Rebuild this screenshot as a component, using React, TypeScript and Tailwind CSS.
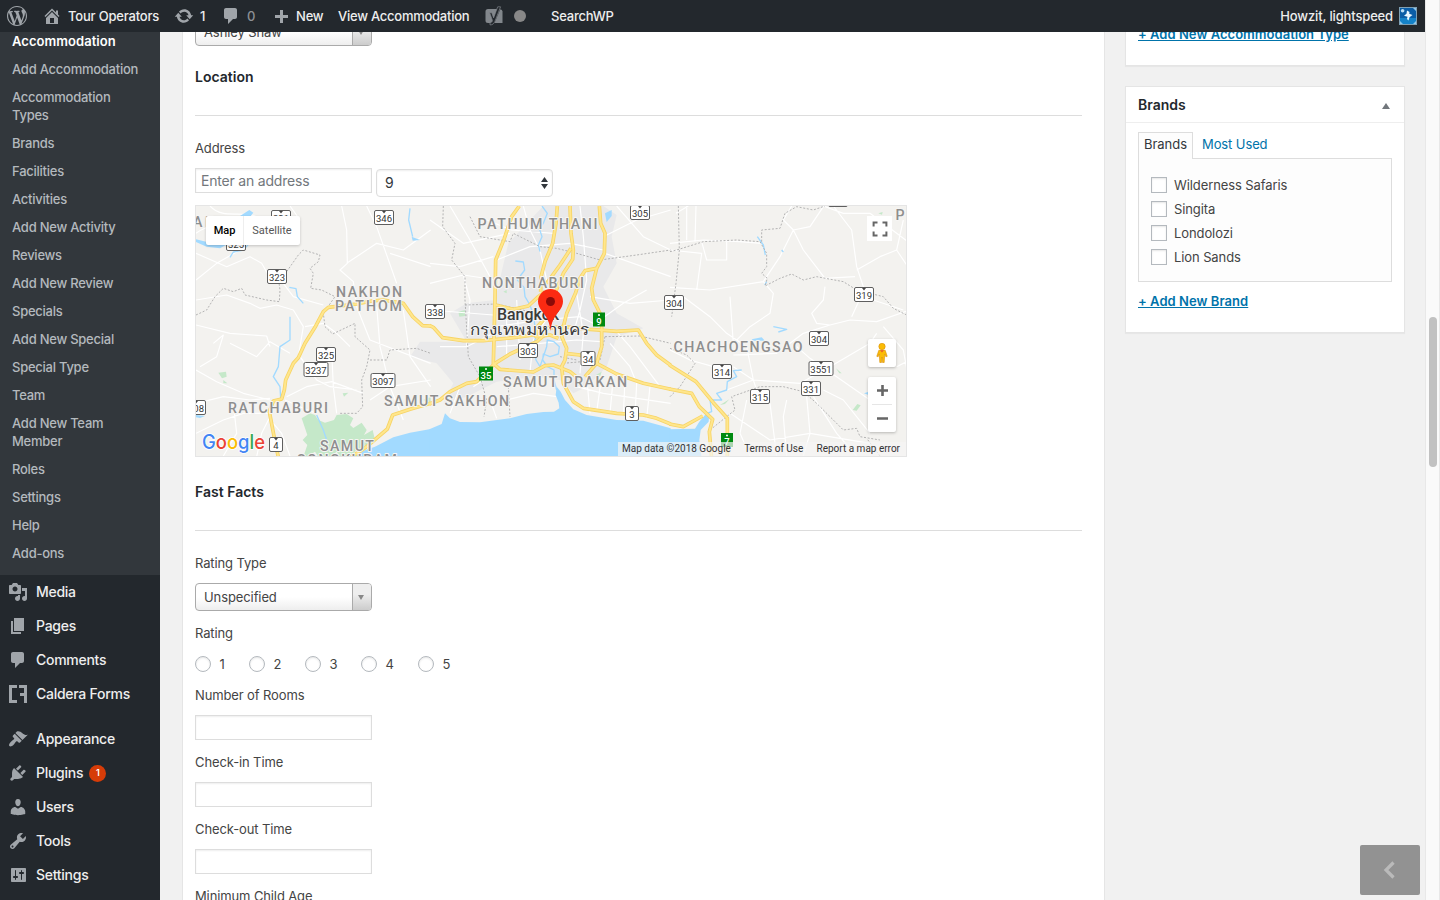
import React from "react";

const ICONS = {
  wordpress:
    "M20 10c0-5.51-4.49-10-10-10C4.48 0 0 4.49 0 10c0 5.52 4.48 10 10 10 5.51 0 10-4.48 10-10zM7.78 15.37L4.37 6.22c.55-.02 1.17-.08 1.17-.08.5-.06.44-1.13-.06-1.11 0 0-1.45.11-2.37.11-.18 0-.37 0-.58-.01C4.12 2.69 6.87 1.11 10 1.11c2.33 0 4.45.87 6.05 2.34-.68-.11-1.65.39-1.65 1.58 0 .74.45 1.36.9 2.1.35.61.55 1.36.55 2.46 0 1.49-1.4 5-1.4 5l-3.03-8.37c.54-.02.82-.17.82-.17.5-.05.44-1.25-.06-1.22 0 0-1.44.12-2.38.12-.87 0-2.33-.12-2.33-.12-.5-.03-.56 1.2-.06 1.22l.92.08 1.26 3.41zM17.41 10c.24-.64.74-1.87.43-4.25.7 1.29 1.05 2.71 1.05 4.25 0 3.29-1.73 6.24-4.4 7.78.97-2.59 1.94-5.2 2.92-7.78zM6.1 18.09C3.12 16.65 1.11 13.53 1.11 10c0-1.3.23-2.48.72-3.59C3.25 10.3 4.67 14.2 6.1 18.09zm4.03-6.63l2.58 6.98c-.86.29-1.76.45-2.71.45-.79 0-1.57-.11-2.29-.33.81-2.38 1.62-4.74 2.42-7.1z",
  home: "M16 8.5l1.53 1.53-1.06 1.06L10 4.6l-6.47 6.49-1.06-1.06L10 2.5l4 4v-2h2v4zm-6-2.46l6 5.99V18H4v-5.97zM12 17v-5H8v5h4z",
  update:
    "M10.2 3.28c3.53 0 6.43 2.61 6.92 6h2.08l-3.5 4-3.5-4h2.32c-.45-1.97-2.21-3.45-4.32-3.45-1.45 0-2.73.71-3.54 1.78L4.95 5.66C6.23 4.2 8.11 3.28 10.2 3.28zm-.4 13.44c-3.52 0-6.43-2.61-6.92-6H.8l3.5-4c1.17 1.33 2.33 2.67 3.5 4H5.48c.45 1.97 2.21 3.45 4.32 3.45 1.45 0 2.73-.71 3.54-1.78l1.71 1.95c-1.28 1.46-3.15 2.38-5.25 2.38z",
  comments:
    "M5 2h9c1.1 0 2 .9 2 2v7c0 1.1-.9 2-2 2h-2l-5 5v-5H5c-1.1 0-2-.9-2-2V4c0-1.1.9-2 2-2z",
  plus: "M17 9v3h-5v5H9v-5H4V9h5V4h3v5h5z",
  media:
    "M13 11V4c0-.55-.45-1-1-1h-1.67L9 1H5L3.67 3H2c-.55 0-1 .45-1 1v7c0 .55.45 1 1 1h10c.55 0 1-.45 1-1zM7 4.5c1.38 0 2.5 1.12 2.5 2.5S8.38 9.5 7 9.5 4.5 8.38 4.5 7 5.62 4.5 7 4.5zM14 6h5v10.5c0 1.38-1.12 2.5-2.5 2.5S14 17.88 14 16.5s1.12-2.5 2.5-2.5c.17 0 .34.02.5.05V9h-3V6zm-4 8.05V13h2v3.5c0 1.38-1.12 2.5-2.5 2.5S7 17.88 7 16.5 8.12 14 9.5 14c.17 0 .34.02.5.05z",
  pages: "M6 15V2h10v13H6zm-1 1h8v2H3V5h2v11z",
  caldera: "M1 1h8v3H4v12h5v3H1zM11 1h8v18h-3v-7h-4v-3h4V4h-5z",
  appearance:
    "M14.48 11.06L7.41 3.99l1.5-1.5c.5-.56 2.3-.47 3.51.32 1.21.8 1.43 1.28 2.91 2.1 1.18.64 2.45 1.26 4.45.85zm-.71.71L6.7 4.7 4.93 6.47c-.39.39-.39 1.02 0 1.41l1.06 1.06c.39.39.39 1.03 0 1.42-.6.6-1.43 1.11-2.21 1.69-.35.26-.7.53-1.01.84C1.43 14.23.4 16.08 1.4 17.07c.99 1 2.84-.03 4.18-1.36.31-.31.58-.66.85-1.02.57-.78 1.08-1.61 1.69-2.21.39-.39 1.02-.39 1.41 0l1.06 1.06c.39.39 1.02.39 1.41 0z",
  plugins:
    "M13.11 4.36L9.87 7.6 8 5.73l3.24-3.24c.35-.34 1.05-.2 1.56.32.52.51.66 1.21.31 1.55zm-8 1.77l.91-1.12 9.01 9.01-1.19.84c-.71.71-2.63 1.16-3.82 1.16H6.14L4.9 17.26c-.59.59-1.54.59-2.12 0-.59-.58-.59-1.53 0-2.12l1.24-1.24v-3.88c0-1.13.4-3.19 1.09-3.89zm7.26 3.97l3.24-3.24c.34-.35 1.04-.21 1.55.31.52.51.66 1.21.31 1.55l-3.24 3.25z",
  users:
    "M10 9.25c-2.27 0-2.73-3.44-2.73-3.44C7 4.02 7.82 2 9.97 2c2.16 0 2.98 2.02 2.71 3.81 0 0-.41 3.44-2.68 3.44zm0 2.57L12.72 10c2.39 0 4.52 2.33 4.52 4.53v2.49s-3.65 1.13-7.24 1.13c-3.65 0-7.24-1.13-7.24-1.13v-2.49c0-2.25 1.94-4.48 4.47-4.48z",
  tools:
    "M16.68 9.77c-1.34 1.34-3.3 1.67-4.95.99l-5.41 6.52c-.99.99-2.59.99-3.58 0s-.99-2.59 0-3.57l6.52-5.42c-.68-1.65-.35-3.61.99-4.95 1.28-1.28 3.12-1.62 4.72-1.06l-2.89 2.89 2.82 2.82 2.86-2.87c.53 1.58.18 3.39-1.08 4.65zM3.81 16.21c.4.39 1.04.39 1.43 0 .4-.4.4-1.04 0-1.43-.39-.4-1.03-.4-1.43 0-.39.39-.39 1.03 0 1.43z",
  settings:
    "M18 16V4c0-.55-.45-1-1-1H4c-.55 0-1 .45-1 1v12c0 .55.45 1 1 1h13c.55 0 1-.45 1-1zM8 11h1c.55 0 1 .45 1 1s-.45 1-1 1H8v1.5c0 .28-.22.5-.5.5s-.5-.22-.5-.5V13H6c-.55 0-1-.45-1-1s.45-1 1-1h1V5.5c0-.28.22-.5.5-.5s.5.22.5.5V11zm5-2h-1c-.55 0-1-.45-1-1s.45-1 1-1h1V5.5c0-.28.22-.5.5-.5s.5.22.5.5V7h1c.55 0 1 .45 1 1s-.45 1-1 1h-1v5.5c0 .28-.22.5-.5.5s-.5-.22-.5-.5V9z",
};

type IconName = keyof typeof ICONS;

function Icon({ name, className = "size-5" }: { name: IconName; className?: string }) {
  return (
    <svg viewBox="0 0 20 20" fill="currentColor" className={`shrink-0 ${className}`}>
      <path d={ICONS[name]} />
    </svg>
  );
}

function YoastIcon() {
  return (
    <svg viewBox="0 0 18 20" className="h-5 w-[18px] shrink-0">
      <path d="M3 3h9.5L7.4 17H3a2.5 2.5 0 0 1-2.500-2.500v-9A2.500 2.500 0 0 1 3 3z" fill="#82878c" />
      <path d="M15.300 3.200A2.500 2.500 0 0 1 17.500 5.500V17H9.500z" fill="#82878c" />
      <path
        d="M12.700.8h2.900L9.900 15.400c-.9 2.300-2.100 3.500-4.900 3.500v-2.200c1.400-.2 2.100-.8 2.300-1.700.1-.5 0-1-.3-1.800L4.600 6.700h2.200l1.800 5.200z"
        fill="#23282d"
        stroke="#82878c"
        strokeWidth=".7"
      />
    </svg>
  );
}

function Avatar() {
  return (
    <svg viewBox="0 0 18 18" className="size-[18px] shrink-0">
      <rect width="18" height="18" fill="#7fa0b4" />
      <rect x="1" y="1" width="16" height="16" fill="#0b5da6" />
      <path d="M1 11h16v6H1z" fill="#1482c8" />
      <circle cx="3.600" cy="3.800" r="1.800" fill="#b9dcf3" />
      <path d="M8 3.500L10.500 5l-.3 1.800L13.500 8l-3 2.200-1 3.300L8 12l.5-2.300L5 8.800l2.500-2z" fill="#e9f7ff" />
      <path d="M14 1h3v3zM1 14v3h3zM17 14v3h-3z" fill="#8fc7ea" />
    </svg>
  );
}

function AdminBar() {
  return (
    <header className="flex h-8 w-[1425px] shrink-0 items-center bg-[#23282d] text-[13px] font-medium tracking-[-0.2px] text-[#eee]">
      <div className="flex w-[42px] pl-[7px] text-[#a0a5aa]">
        <Icon name="wordpress" />
      </div>
      <div className="flex w-[132px] items-center gap-[6px] whitespace-nowrap">
        <Icon name="home" className="size-5 text-[#a0a5aa]" />
        <span className="pt-px">Tour Operators</span>
      </div>
      <div className="flex w-[47px] items-center gap-[6px]">
        <Icon name="update" className="size-5 text-[#a0a5aa]" />
        <span className="pt-px">1</span>
      </div>
      <div className="flex w-[50px] items-center gap-[6px] text-[#8c9095]">
        <Icon name="comments" className="size-5 text-[#a0a5aa]" />
        <span className="pt-px">0</span>
      </div>
      <div className="flex w-[67px] items-center gap-[5px]">
        <Icon name="plus" className="size-5 text-[#a0a5aa]" />
        <span className="pt-px">New</span>
      </div>
      <div className="w-[147px] pt-px tracking-[-0.25px] whitespace-nowrap">View Accommodation</div>
      <YoastIcon />
      <span className="ml-[11px] size-3 rounded-full bg-[#888]" />
      <div className="ml-[25px] pt-px">SearchWP</div>
      <div className="ml-auto flex items-center gap-[6px] pr-2 whitespace-nowrap">
        <span className="pt-px tracking-[-0.15px]">Howzit, lightspeed</span>
        <Avatar />
      </div>
    </header>
  );
}

const SUBMENU = [
  "Accommodation",
  "Add Accommodation",
  "Accommodation Types",
  "Brands",
  "Facilities",
  "Activities",
  "Add New Activity",
  "Reviews",
  "Add New Review",
  "Specials",
  "Add New Special",
  "Special Type",
  "Team",
  "Add New Team Member",
  "Roles",
  "Settings",
  "Help",
  "Add-ons",
];

function MenuRow({ icon, label, badge }: { icon: IconName; label: string; badge?: string }) {
  return (
    <li className="flex h-[34px] items-center pl-2 text-[14px] font-medium tracking-[-0.27px] text-[#eee]">
      <Icon name={icon} className="size-5 text-[#a0a5aa]" />
      <span className="ml-2 pb-[2px]">{label}</span>
      {badge && (
        <span className="ml-[6px] flex size-[17px] items-center justify-center rounded-full bg-[#d63c08] text-[9px] font-semibold text-white">
          {badge}
        </span>
      )}
    </li>
  );
}

function Sidebar() {
  return (
    <nav className="h-full w-40 shrink-0 overflow-hidden bg-[#23282d]">
      <ul className="-mt-[5px] bg-[#32373c] pb-2 text-[13px] leading-[18px] font-medium tracking-[-0.25px] text-[#b4b9be]">
        {SUBMENU.map((item, i) => (
          <li
            key={item}
            className={
              i === 0 ? "px-3 py-[5px] font-semibold tracking-[0.05px] text-white" : "py-[5px] pr-[18px] pl-3"
            }
          >
            {item}
          </li>
        ))}
      </ul>
      <ul>
        <MenuRow icon="media" label="Media" />
        <MenuRow icon="pages" label="Pages" />
        <MenuRow icon="comments" label="Comments" />
        <MenuRow icon="caldera" label="Caldera Forms" />
      </ul>
      <ul className="mt-[11px]">
        <MenuRow icon="appearance" label="Appearance" />
        <MenuRow icon="plugins" label="Plugins" badge="1" />
        <MenuRow icon="users" label="Users" />
        <MenuRow icon="tools" label="Tools" />
        <MenuRow icon="settings" label="Settings" />
      </ul>
    </nav>
  );
}

/* Map geometry is kept in three tiles, each 240 units wide at triple scale. */
const WEST = "translate(190 200) scale(.33333)";
const MID = "translate(430 200) scale(.33333)";
const EAST = "translate(670 200) scale(.33333)";

const WATER: [string, string][] = [
  [WEST, "M480 775 L520 752 L555 740 L610 712 L660 698 L722 687 V775Z"],
  [MID, "M-2 688 L35 672 L45 640 L60 655 L90 666 L150 667 L240 655 L290 642 L340 636 L372 635 L388 625 L386 608 L377 585 L380 560 L392 575 L405 600 L430 628 L470 645 L560 660 L640 662 L722 685 V775 H-2Z"],
  [EAST, "M-2 688 L75 686 L88 665 L105 645 L118 640 L116 665 L92 690 L88 720 L95 775 H-2Z"],
  [WEST, "M18 118 L60 128 L110 118 L120 128 L90 145 L50 140 L18 126Z"],
  [WEST, "M150 48 L178 30 L190 38 L182 48Z M665 110 L690 120 L668 122Z M18 645 L45 648 L30 654 L18 652Z"],
  [MID, "M525 40 L545 30 L545 48 L530 66Z"],
  [EAST, "M245 418 L275 412 L285 422 L250 422Z M582 580 L596 575 L596 585Z"],
];

const RIVERS: [string, string][] = [
  [MID, "M336 18 L352 40 L340 70 L328 85 L336 110 L325 135 L330 155"],
  [MID, "M256 183 L280 186 L284 210 L262 240 L282 262 L285 290 L300 315 L310 345 L318 400 L312 440 L318 480 L330 500 L340 470 L350 440 L352 420 L372 425 L388 440 L385 462 L360 470 L340 462 L338 480 L352 500 L372 510 L372 540 L380 570"],
  [WEST, "M120 172 L130 156 L160 150 L180 128 M298 262 L318 266 L322 290 L340 310 M300 350 V420 L270 440 L265 500 L250 530 L270 560 L272 595 M660 25 L656 60 L668 110 M380 645 L400 690 L410 720"],
  [EAST, "M262 110 L280 135 L286 165 M290 245 L284 255 M335 150 L340 156 M310 380 L350 388 L325 396 M215 510 L190 512 L200 530 L172 545 L170 570 L140 580 L155 600 L120 600 L125 635 L110 640"],
];

const PARKS: [string, string][] = [
  [WEST, "M335 655 L360 640 L375 645 L385 660 L405 668 L432 660 L440 645 L470 642 L490 655 L480 675 L490 684 L515 668 L530 690 L522 705 L548 690 L555 720 L540 735 L500 750 L480 770 H450 L440 755 L420 770 H385 L375 755 L350 770 H340 L352 735 L338 720 L352 705Z"],
  [WEST, "M85 518 L108 515 L110 530 L96 535Z M100 540 L112 550 L100 550Z M458 580 L475 578 L462 590Z M700 600 L722 590 V610Z"],
  [EAST, "M625 40 L638 36 L636 44Z M498 505 L515 520 L508 520Z M548 630 L562 612 L572 616 L560 632Z M150 615 L178 598 L165 612Z"],
  [MID, "M220 275 L230 270 L230 280Z M318 290 L330 285 L330 298Z M498 525 L515 515 L510 530Z M85 335 L105 330 L105 348 L88 350Z"],
];

const URBAN =
  "M195 300 L235 130 L300 60 L340 18 H520 L560 45 L545 110 L560 190 L520 260 L560 340 L640 385 L560 410 L530 500 L470 560 L430 580 L390 540 L320 530 L200 545 L110 590 L40 610 L70 550 L20 490 L-60 470 L-30 425 L110 425 L60 340 L110 310Z";

const LANES: [string, string][] = [
  [WEST, "M18 100 C60 70 100 70 140 75 S210 50 250 55 M18 240 L80 190 L150 150 L215 110 L330 60 L300 18 M60 18 C100 60 150 30 200 50 M18 160 L110 200 L180 170 L215 190 L235 225 M280 250 L310 290 L400 315 M455 18 L470 90 L472 190 L450 210 L490 245 L500 320 M530 18 L560 80 L620 250 M722 90 L640 150 L560 130 L470 190 M600 160 L722 200 M18 300 L110 285 L180 310 L210 325 L260 315 L310 330 M18 375 L120 400 L230 408 L240 440 M70 430 L100 405 L80 470 L30 500 M18 510 L80 545 L160 580 L240 600 M18 610 L100 590 L180 600 L240 595 M18 700 L100 660 L160 640 L240 640 M300 460 L240 425 L200 470 L120 430 M310 330 L340 380 L325 470 M345 380 L400 370 L440 400 L480 440 M330 470 L380 540 L420 560 L500 570 M290 590 L350 560 L425 545 L520 580 M425 450 L430 560 L440 640 M285 600 L340 625 L380 640 M200 770 L215 700 L240 650 M300 768 L275 700 L250 670 M560 320 L570 440 L600 560 L640 660 M500 320 L540 420 L722 490 M640 330 L660 470 L722 560 M540 600 L600 560 L722 540 M100 768 L140 700 L130 610"],
  [MID, "M0 60 L100 130 L240 100 M0 190 L90 200 L190 170 M60 18 L120 120 L180 230 M0 250 L100 225 L200 240 M0 330 L190 345 M30 440 L110 440 L190 400 M110 440 L120 300 L100 225 M170 60 L245 90 L370 100 M200 180 L300 140 L420 130 L520 150 M280 18 L300 90 L330 150 L350 240 M450 18 L460 110 L470 240 L450 330 L430 400 M520 110 L620 60 L722 30 M525 160 L722 230 M560 18 L640 110 L722 150 M480 290 L600 310 L722 300 M510 360 L580 310 L650 270 M200 380 L330 360 L450 350 L510 380 M230 470 L230 330 M260 300 L270 480 M200 440 L330 430 L440 420 L512 425 M300 516 L310 420 L360 340 M440 280 L460 400 L450 520 M130 560 L190 520 M180 600 L200 655 M230 600 L310 580 L380 590 M90 560 L60 640 M470 530 L480 640 M515 530 L500 635 M550 530 L540 640 M585 540 L580 645 M620 550 L615 650 M660 560 L650 655 M540 430 L600 500 L620 550 M560 395 L600 440 L690 560 M440 560 L520 580 L722 610"],
  [EAST, "M18 40 L55 18 M50 18 V120 M78 18 L75 125 M0 130 L100 120 L210 125 L275 130 M95 125 L110 180 L170 180 L170 125 M0 150 L95 160 L80 270 M0 262 L120 270 L280 245 M280 245 L330 170 L370 90 L340 60 L365 18 M370 90 L420 80 L460 20 M490 18 L545 90 L560 200 L580 260 L575 285 M370 90 L400 150 L465 235 L555 230 M460 18 L520 40 L600 40 L720 130 M560 210 L630 170 L680 150 L720 210 M680 150 L700 60 M40 290 L120 350 L170 400 L230 440 L250 540 L270 600 M280 245 L310 280 L300 340 L240 380 L190 430 M0 450 L60 480 L130 500 M190 430 L180 290 M190 465 L320 460 L400 400 L480 375 L540 360 L620 365 L720 330 M465 260 L460 300 L425 340 L440 370 L480 375 M575 285 L545 350 M610 300 L700 330 M380 440 L420 475 L600 600 M190 500 L250 540 L390 550 L480 500 L600 430 L620 400 M250 540 L170 570 M410 590 L420 700 L400 768 M300 610 L320 768 M350 600 L340 650 L350 768 M180 640 L300 720 L420 700 L600 730 M230 600 L210 700 L240 768 M430 590 L500 700 L560 768 M460 570 L520 600 L600 700 M640 380 L700 450 L720 560 M680 500 L720 480"],
];

const BORDERS: [string, string][] = [
  [WEST, "M18 345 L50 330 L75 290 L100 265 L130 275 L155 265 L165 285 L230 300 L268 305 L270 270 L265 235 L290 215 L325 165 L340 150 L390 165 L385 185 L360 205 L370 220 L362 265 L395 270 L435 290 L400 340 L405 380 L428 402 L495 370 L495 410 L540 450 L530 500 L515 540 L518 620 L500 640 L450 640 M540 480 L590 480 L600 450 L680 445 L722 460"],
  [MID, "M40 18 L38 80 L75 130 L65 180 L105 230 L105 300 L115 470 L150 530 L170 600 L162 650 M105 315 L200 312 L320 340 M120 50 L150 110 L240 125 L250 100 L330 140 L380 145 L440 160 L510 180 L620 165 L722 150 M525 410 L630 408 L722 430 M525 410 L510 480 L400 490 M390 470 L440 480 M235 560 L240 650"],
  [EAST, "M25 18 L28 150 L18 250 L5 350 M0 155 L20 150 L100 125 L200 120 L270 125 L290 160 L290 200 L275 220 L292 235 L285 258 L330 235 L365 222 L400 240 L440 230 L520 245 L560 270 L640 290 L670 325 L710 345 M275 125 L275 90 L330 85 L345 40 L380 20 L430 30 L465 18 M0 445 L50 465 L75 490 L30 560 L0 590 M120 690 L195 630 L185 590 L270 560 L340 560 L400 575 L440 610 L520 690 L560 685 L570 710 L630 720 M630 768 L590 715"],
];

const HIGHWAYS: [string, string][] = [
  [WEST, "M266 775 L258 740 L238 635 L250 603 L275 597 L283 570 L287 540 L310 490 L325 473 L345 430 L375 382 L400 335 L415 322 L500 312 L545 303 L580 300 L640 310 L668 350 L698 377 L722 378"],
  [MID, "M-2 376 L10 382 L38 413 L100 422 L160 422 L250 413 L310 405 L335 385 L400 380 L480 388 L560 394 L625 390 L650 430 L680 465 L722 496"],
  [EAST, "M-2 495 L78 545 L130 608 L172 655 V775"],
  [WEST, "M478 775 L530 740 L592 687 L608 645 L660 628 L722 610"],
  [MID, "M-2 612 L30 600 L60 575 L110 550 L140 545 L195 490 L240 462 L320 425 L350 400"],
  [MID, "M268 18 L245 50 L222 118 L197 180 L195 300 L190 490 L210 508 L310 516 L345 497 L370 495 L420 515 L445 535"],
  [MID, "M382 18 L378 70 L368 130 L345 185 L333 230 L332 275"],
  [MID, "M420 18 L423 100 L430 150 L428 178 L400 220 L375 280 M423 145 L390 195 L350 250"],
  [MID, "M508 18 L512 70 L525 100 L523 160 L500 205 L485 265 L490 300 L515 350 L515 440 L500 490 L465 530"],
  [MID, "M500 205 L465 212 L450 235 L437 278 L410 340 L400 380 L395 410 L410 445 L405 480 L395 500 L400 550 L430 605 L460 625 L560 640 L640 645 L680 655 L722 672"],
  [MID, "M197 315 L250 328 L295 318 L325 290 L345 275 M340 360 L322 380 L318 410 L360 405 L385 415"],
  [MID, "M405 460 L450 465 L500 490 L560 522 L640 550 L722 568"],
  [EAST, "M-2 567 L65 580 L88 620 L128 658 L118 695 L125 775 M-2 672 L40 680 L98 648"],
];

const SHIELDS: [number, number, string, number?][] = [
  [384, 217, "346"],
  [281, 217, "321"],
  [236, 243, "325"],
  [277, 276, "323"],
  [435, 311, "338"],
  [326, 354, "325"],
  [316, 369, "3237", 24],
  [383, 380, "3097", 24],
  [196, 407, "308"],
  [276, 444, "4", 13],
  [640, 212, "305"],
  [674, 302, "304"],
  [528, 350, "303"],
  [588, 358, "34", 14],
  [632, 413, "3", 13],
  [864, 294, "319"],
  [819, 338, "304"],
  [821, 368, "3551", 24],
  [811, 388, "331"],
  [722, 371, "314"],
  [760, 396, "315"],
];

const PLACES: [number, number, string, number][] = [
  [369, 296.500, "NAKHON", 66],
  [368.500, 310.500, "PATHOM", 67],
  [278, 412.500, "RATCHABURI", 100],
  [446.500, 405.500, "SAMUT SAKHON", 125],
  [347, 450.500, "SAMUT", 54],
  [347, 464.500, "SONGKHRAM", 100],
  [537.500, 228.500, "PATHUM THANI", 120],
  [533, 287.500, "NONTHABURI", 102],
  [565, 386.500, "SAMUT PRAKAN", 124],
  [738, 351.500, "CHACHOENGSAO", 129],
  [900, 220, "P", 9],
  [203, 227, "AE", 20],
];

function Drawn({ items, ...rest }: { items: [string, string][] } & React.SVGProps<SVGGElement>) {
  return (
    <g {...rest}>
      {items.map(([t, d], i) => (
        <path key={i} transform={t} d={d} />
      ))}
    </g>
  );
}

function MapDrawing() {
  return (
    <svg
      viewBox="196 206 710 250"
      className="block h-[250px] w-[710px] [font-family:Roboto,'Noto_Sans',sans-serif]"
      strokeLinejoin="round"
    >
      <rect x="196" y="206" width="710" height="250" fill="#f3f2ef" />
      <path transform={MID} d={URBAN} fill="#e9e9ea" />
      <Drawn items={PARKS} fill="#c5e8c9" />
      <Drawn items={LANES} fill="none" stroke="#fff" strokeWidth="3.500" />
      <Drawn items={WATER} fill="#a2daff" />
      <Drawn items={RIVERS} fill="none" stroke="#a2daff" strokeWidth="4" />
      <Drawn items={BORDERS} fill="none" stroke="#b3b3b3" strokeWidth="3" strokeDasharray="6 5" />
      <Drawn items={HIGHWAYS} fill="none" stroke="#f7d466" strokeWidth="11" />
      <Drawn items={HIGHWAYS} fill="none" stroke="#ffe68c" strokeWidth="6" />

      {SHIELDS.map(([x, y, label, w = 19], i) => (
        <g key={i}>
          <rect x={x - w / 2} y={y - 6.500} width={w} height="14" rx="1.500" fill="#fff" stroke="#5f5f5f" />
          <path d={`M${x - 2} ${y - 6} h4 l-2 2.500z`} fill="#444" />
          <text x={x} y={y + 5} textAnchor="middle" fontSize="9.500" fill="#333">
            {label}
          </text>
        </g>
      ))}
      <rect x="828.500" y="200" width="19" height="6.500" rx="1.500" fill="#fff" stroke="#5f5f5f" />
      {[
        [599, 319.500, "9"],
        [486, 373.500, "35"],
        [727, 440, "7"],
      ].map(([x, y, label]) => (
        <g key={label}>
          <rect x={Number(x) - (label === "35" ? 7 : 6)} y={Number(y) - 7} width={label === "35" ? 14 : 12} height="14" fill="#008a10" />
          <circle cx={x} cy={Number(y) - 4.500} r="1" fill="#fff" />
          <text x={x} y={Number(y) + 5} textAnchor="middle" fontSize="9.500" fontWeight="500" fill="#fff">
            {label}
          </text>
        </g>
      ))}

      <g fontSize="14.200" fontWeight="500" fill="#8e8e8e" stroke="#f6f5f3" strokeWidth="2" paintOrder="stroke" textAnchor="middle">
        {PLACES.map(([x, y, label, w]) => (
          <text key={label + y} x={x} y={y} textLength={w} lengthAdjust="spacing">
            {label}
          </text>
        ))}
      </g>
      <g fill="#3a3a3a" stroke="#f4f4f4" strokeWidth="2" paintOrder="stroke" fontWeight="500">
        <text x="497" y="319.500" fontSize="16" textLength="62" lengthAdjust="spacingAndGlyphs">
          Bangkok
        </text>
        <text x="470" y="335" fontSize="15" fontWeight="500" textLength="119" lengthAdjust="spacingAndGlyphs">
          กรุงเทพมหานคร
        </text>
      </g>
      <path
        d="M550.500 331 C549.500 322 547.500 318.500 543 312.500 C539.500 308 538 305 538 301.500 A12.500 12.500 0 0 1 563 301.500 C563 305 561.500 308 558 312.500 C553.500 318.500 551.500 322 550.500 331Z"
        fill="#fb2a12"
      />
      <circle cx="550.500" cy="301.500" r="4.500" fill="#8c0a08" />

      <text x="202" y="448.500" fontSize="20" fontWeight="500" textLength="63" lengthAdjust="spacingAndGlyphs" stroke="#fff" strokeWidth="1.500" paintOrder="stroke" className="[font-family:Inter,sans-serif]">
        <tspan fill="#4285f4">G</tspan>
        <tspan fill="#ea4335">o</tspan>
        <tspan fill="#fbbc05">o</tspan>
        <tspan fill="#4285f4">g</tspan>
        <tspan fill="#34a853">l</tspan>
        <tspan fill="#ea4335">e</tspan>
      </text>
    </svg>
  );
}

function Pegman() {
  return (
    <svg viewBox="0 0 12 20" className="h-5 w-3">
      <circle cx="6" cy="3.500" r="3.200" fill="#fbbc05" stroke="#d98f0c" strokeWidth=".6" />
      <path d="M2.800 7.300h6.400l2 6-1.300.5L8.700 11l-.5 8.500H6.500L6 14l-.5 5.500H3.800L3.300 11l-1.200 2.800-1.300-.5z" fill="#fbbc05" stroke="#d98f0c" strokeWidth=".6" />
      <path d="M4 7.200h4L6 9.600z" fill="#e8592f" />
    </svg>
  );
}

function MapPanel() {
  return (
    <div className="relative mt-2 h-[252px] w-[712px] border border-[#e5e5e5]">
      <MapDrawing />
      <div className="absolute top-[10px] left-[10px] flex h-[29px] rounded-xs bg-white text-[11px] shadow-[0_1px_3px_rgba(0,0,0,.2)] [font-family:Roboto,sans-serif]">
        <div className="flex w-[38px] items-center justify-center border-r border-[#eee] pt-px font-medium text-black">Map</div>
        <div className="flex w-[56px] items-center justify-center pt-px text-[#565656]">Satellite</div>
      </div>
      <div className="absolute top-[10px] left-[671px] flex size-[25px] items-center justify-center bg-white">
        <svg viewBox="0 0 16 16" className="size-4" fill="none" stroke="#666" strokeWidth="2">
          <path d="M1.600 5.500V1.600h3.900M10.500 1.600h3.900v3.900M14.400 10.500v3.900h-3.900M5.500 14.400H1.600v-3.900" />
        </svg>
      </div>
      <div className="absolute top-[133px] left-[672px] flex size-7 items-center justify-center rounded-xs bg-white shadow-[0_1px_3px_rgba(0,0,0,.25)]">
        <Pegman />
      </div>
      <div className="absolute top-[171px] left-[672px] flex h-[55px] w-7 flex-col items-center rounded-xs bg-white shadow-[0_1px_3px_rgba(0,0,0,.25)]">
        <svg viewBox="0 0 28 55" className="h-[55px] w-7" stroke="#666" strokeWidth="2.600">
          <path d="M9 13.500h11M14.500 8v11M9 41.500h11" />
          <path d="M4 27.500h20" stroke="#e6e6e6" strokeWidth="1" />
        </svg>
      </div>
      <div className="absolute right-0 bottom-0 flex h-[14px] w-[288px] items-center justify-between bg-[#f5f5f5]/70 pr-[6px] pb-px pl-1 text-[10px] whitespace-nowrap text-[#333] [font-family:Roboto,sans-serif]">
        <span>Map data ©2018 Google</span>
        <span>Terms of Use</span>
        <span>Report a map error</span>
      </div>
    </div>
  );
}

function Chosen({ label, className }: { label: string; className: string }) {
  return (
    <div
      className={`flex h-7 w-[177px] shrink-0 items-stretch overflow-hidden rounded-[4px] border border-[#aaa] bg-linear-to-b from-white from-50% to-[#eee] text-[13px] tracking-[-0.1px] text-[#444] ${className}`}
    >
      <div className="flex flex-1 items-center pt-px pl-2">{label}</div>
      <div className="flex w-[19px] items-center justify-center border-l border-[#aaa] bg-linear-to-b from-[#eee] from-40% to-[#ccc]">
        <svg viewBox="0 0 6 5" className="mt-px mr-[2px] h-[5px] w-[6px]">
          <path d="M0 0h6L3 5z" fill="#888" />
        </svg>
      </div>
    </div>
  );
}

function SectionTitle({ text, className }: { text: string; className: string }) {
  return (
    <>
      <h2 className={`h-[30px] text-[14px] leading-[30px] font-semibold text-[#23282d] ${className}`}>{text}</h2>
      <hr className="mt-[23px] w-[887px] border-[#ddd]" />
    </>
  );
}

function Label({ text, className }: { text: string; className: string }) {
  return (
    <label className={`block h-5 text-[13px] leading-5 tracking-[-0.12px] text-[#444] ${className}`}>{text}</label>
  );
}

function TextBox({ placeholder }: { placeholder?: string }) {
  return (
    <input
      type="text"
      placeholder={placeholder}
      className="block h-[25px] w-[177px] rounded-none border border-[#ddd] bg-white px-[5px] text-[14px] tracking-[-0.2px] text-[#32373c] shadow-[inset_0_1px_2px_rgba(0,0,0,.07)] placeholder:text-[#72777c]"
    />
  );
}

function DetailsPanel() {
  return (
    <section className="ml-[22px] h-full w-[923px] shrink-0 overflow-hidden border-x border-[#e5e5e5] bg-white px-3">
      <Chosen label="Ashley Shaw" className="-mt-[14px]" />
      <SectionTitle text="Location" className="mt-4" />
      <Label text="Address" className="mt-[22px]" />
      <div className="mt-[10px] flex h-[29px] gap-1">
        <TextBox placeholder="Enter an address" />
        <div className="mt-px flex h-7 w-[177px] items-center justify-between rounded-[4px] border border-[#ddd] bg-white pr-1 pl-2 text-[14px] text-[#32373c] shadow-[inset_0_1px_2px_rgba(0,0,0,.07)]">
          <span className="pb-px">9</span>
          <svg viewBox="0 0 7 12" className="h-3 w-[7px]" fill="#32373c">
            <path d="M3.500 0L7 5H0zM3.500 12L0 7h7z" />
          </svg>
        </div>
      </div>
      <MapPanel />
      <SectionTitle text="Fast Facts" className="mt-5" />
      <Label text="Rating Type" className="mt-[22px]" />
      <Chosen label="Unspecified" className="mt-[10px]" />
      <Label text="Rating" className="mt-3" />
      <div className="mt-[13px] grid h-4 grid-cols-[54px_56px_56px_57px_50px] text-[13px] leading-4 text-[#444]">
        {["1", "2", "3", "4", "5"].map((n) => (
          <label key={n} className="flex h-4 items-center gap-[8.500px]">
            <span className="size-4 rounded-full border border-[#b4b9be] bg-white shadow-[inset_0_1px_2px_rgba(0,0,0,.1)]" />
            {n}
          </label>
        ))}
      </div>
      <Label text="Number of Rooms" className="mt-[13px] mb-[10px]" />
      <TextBox />
      <Label text="Check-in Time" className="mt-3 mb-[10px]" />
      <TextBox />
      <Label text="Check-out Time" className="mt-3 mb-[10px]" />
      <TextBox />
      <Label text="Minimum Child Age" className="mt-3" />
    </section>
  );
}

function SidePanels() {
  return (
    <aside className="ml-5 w-[280px] shrink-0 text-[13px]">
      <div className="h-[34px] overflow-hidden border border-t-0 border-[#e5e5e5] bg-white px-3 shadow-[0_1px_1px_rgba(0,0,0,.04)]">
        <a className="-mt-[7px] block leading-[18px] font-semibold tracking-[0.03px] whitespace-nowrap text-[#0073aa] underline">
          + Add New Accommodation Type
        </a>
      </div>
      <div className="mt-5 h-[247px] border border-[#e5e5e5] bg-white shadow-[0_1px_1px_rgba(0,0,0,.04)]">
        <div className="flex h-9 items-center justify-between border-b border-[#eee] pr-[14px] pl-3">
          <h2 className="text-[14px] font-semibold text-[#23282d]">Brands</h2>
          <svg viewBox="0 0 8 6" className="mt-[2px] h-[6px] w-2">
            <path d="M4 0l4 6H0z" fill="#72777c" />
          </svg>
        </div>
        <div className="mt-[9px] flex h-[27px] px-3">
          <div className="z-10 flex w-[55px] items-center justify-center border border-b-0 border-[#ddd] bg-[#fdfdfd] pb-[2px] text-[#32373c]">
            Brands
          </div>
          <a className="ml-[9px] flex items-center pb-px tracking-[-0.1px] text-[#0073aa]">Most Used</a>
        </div>
        <div className="mx-3 -mt-px flex h-[124px] flex-col gap-2 border border-[#ddd] bg-[#fdfdfd] pt-[18px] pl-3 tracking-[-0.1px] text-[#444]">
          {["Wilderness Safaris", "Singita", "Londolozi", "Lion Sands"].map((b) => (
            <label key={b} className="flex h-4 items-center gap-[7px]">
              <span className="size-4 border border-[#b4b9be] bg-white shadow-[inset_0_1px_2px_rgba(0,0,0,.1)]" />
              <span className="pt-px">{b}</span>
            </label>
          ))}
        </div>
        <a className="mt-[10px] ml-3 block leading-[18px] font-semibold tracking-[0.05px] text-[#0073aa] underline">
          + Add New Brand
        </a>
      </div>
    </aside>
  );
}

export default function App() {
  return (
    <div className="relative flex h-[900px] w-[1440px] overflow-hidden bg-[#f1f1f1] [font-family:Inter,'Liberation_Sans',sans-serif]">
      <div className="flex h-full w-[1425px] flex-col">
        <AdminBar />
        <div className="flex min-h-0 flex-1">
          <Sidebar />
          <DetailsPanel />
          <SidePanels />
        </div>
      </div>
      <div className="h-full w-[15px] border-x border-[#e8e8e8] bg-[#fafafa] pt-[317px] pl-[3px]">
        <div className="h-[150px] w-2 rounded-full bg-[#c1c1c1]" />
      </div>
      <button className="absolute right-5 bottom-[5px] flex h-[50px] w-[60px] items-center justify-center rounded-[2px] bg-[#929292]">
        <svg viewBox="0 0 12 18" className="mr-[3px] h-[18px] w-3" fill="none" stroke="#bababa" strokeWidth="3.200">
          <path d="M10.500 1.500L3 9l7.500 7.500" />
        </svg>
      </button>
    </div>
  );
}
